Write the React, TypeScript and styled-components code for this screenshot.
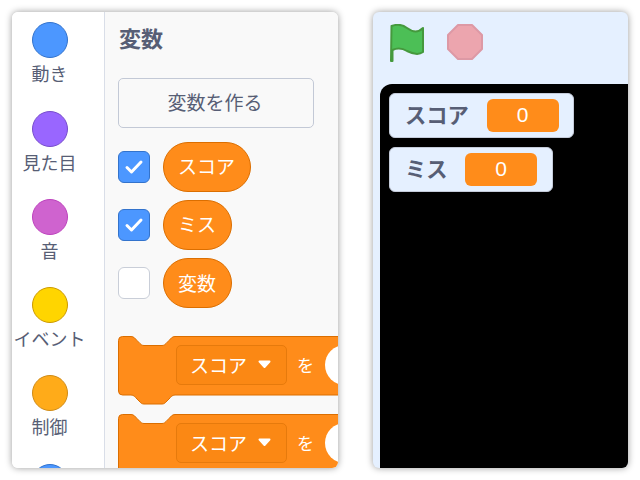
import { FC } from "react";
import styled, { createGlobalStyle } from "styled-components";

const FONT = `"Noto Sans CJK JP", "Noto Sans", sans-serif`;

const categories = [
  { label: "動き", color: "#4c97ff", border: "#3373cc" },
  { label: "見た目", color: "#9966ff", border: "#774dcb" },
  { label: "音", color: "#cf63cf", border: "#bd42bd" },
  { label: "イベント", color: "#ffd500", border: "#cc9900" },
  { label: "制御", color: "#ffab19", border: "#cf8b17" },
  { label: "", color: "#4c97ff", border: "#3373cc" },
];

const variables = [
  { name: "スコア", checked: true },
  { name: "ミス", checked: true },
  { name: "変数", checked: false },
];

const monitors = [
  { name: "スコア", value: 0 },
  { name: "ミス", value: 0 },
];

const App: FC = () => {
  return (
    <SPage>
      <GlobalStyle />
      <SEditor>
        <SCategories>
          {categories.map((c) => (
            <SCategory key={c.color + c.label}>
              <SBubble $color={c.color} $border={c.border} />
              {c.label && <span>{c.label}</span>}
            </SCategory>
          ))}
        </SCategories>
        <SFlyout>
          <SHeading>変数</SHeading>
          <SMakeButton>変数を作る</SMakeButton>
          <SVarList>
            {variables.map((v) => (
              <SVarRow key={v.name}>
                <SCheck $checked={v.checked}>
                  {v.checked && (
                    <svg width="20" height="20" viewBox="0 0 20 20">
                      <path d="M3 10.5 L7.5 15 L17 5" fill="none" stroke="#fff" strokeWidth="3" strokeLinecap="round" strokeLinejoin="round" />
                    </svg>
                  )}
                </SCheck>
                <SPill>{v.name}</SPill>
              </SVarRow>
            ))}
          </SVarList>
          <SBlockList>
            <Block />
            <Block />
          </SBlockList>
        </SFlyout>
      </SEditor>
      <SStageWrap>
        <SControls>
          <svg width="36" height="38" viewBox="0 0 36 38">
            <path d="M2.5 2 C8 0 14 1 18 4 C22 7 28 10 34 4 V28 C30 31 24 30 18 27 C13 24 8 24 3.5 26 V37 H2 Z" fill="#4cbf56" stroke="#45993d" strokeWidth="2" strokeLinejoin="round" />
          </svg>
          <svg width="36" height="36" viewBox="0 0 36 36">
            <path d="M11 1 H25 L35 11 V25 L25 35 H11 L1 25 V11 Z" fill="#eca5ae" stroke="#dd99a5" strokeWidth="2" strokeLinejoin="round" />
          </svg>
        </SControls>
        <SStage>
          {monitors.map((m) => (
            <SMonitor key={m.name}>
              <SMonitorLabel>{m.name}</SMonitorLabel>
              <SMonitorValue>{m.value}</SMonitorValue>
            </SMonitor>
          ))}
        </SStage>
      </SStageWrap>
    </SPage>
  );
};

const Block: FC = () => (
  <SBlock>
    <SBlockShape width="222" height="69" viewBox="0 0 222 69">
      <path d="M0.5 4.5 a4 4 0 0 1 4-4 H13 c3 0 4 2 6 4 l3 3 c1 1 2 2 4 2 H44 c2 0 3-1 4-2 l3-3 c2-2 3-4 6-4 H222 V59 H57 c-3 0-4 2-6 4 l-3 3 c-1 1-2 2-4 2 H26 c-2 0-3-1-4-2 l-3-3 c-2-2-3-4-6-4 H4.5 a4 4 0 0 1-4-4 Z" fill="#ff8c1a" stroke="#db6e00" />
    </SBlockShape>
    <SDropdown>
      <span>スコア</span>
      <svg width="13" height="9" viewBox="0 0 13 9">
        <path d="M1.5 1.5 H11.5 L6.5 7 Z" fill="#fff" stroke="#fff" strokeWidth="2" strokeLinejoin="round" />
      </svg>
    </SDropdown>
    <SBlockText>を</SBlockText>
    <SBlockInput />
  </SBlock>
);

const GlobalStyle = createGlobalStyle`
  html, body {
    margin: 0;
    padding: 0;
    background: #fff;
    font-family: ${FONT};
  }
  * {
    box-sizing: border-box;
  }
`;

const SPage = styled.div`
  width: 640px;
  height: 480px;
  padding: 12px;
  display: flex;
  gap: 35px;
  overflow: hidden;
`;
const SEditor = styled.div`
  width: 326px;
  height: 456px;
  display: flex;
  background: #fff;
  border-radius: 6px;
  overflow: hidden;
  box-shadow: 0 0 7px rgba(0, 0, 0, 0.4);
`;
const SCategories = styled.div`
  width: 93px;
  flex-shrink: 0;
  padding: 10.25px 17px 0 0;
  background: #fff;
  border-right: 1px solid #d9dee8;
  display: flex;
  flex-direction: column;
  align-items: center;
  overflow: hidden;
`;
const SCategory = styled.div`
  height: 88.25px;
  flex-shrink: 0;
  display: flex;
  flex-direction: column;
  align-items: center;
  color: #575e75;
  font-size: 18px;
  line-height: 30px;
  white-space: nowrap;
`;
const SBubble = styled.div<{ $color: string; $border: string }>`
  width: 36px;
  height: 36px;
  border-radius: 50%;
  background: ${(p) => p.$color};
  border: 1px solid ${(p) => p.$border};
`;
const SFlyout = styled.div`
  flex: 1;
  min-width: 0;
  background: #f9f9f9;
  padding: 10px 0 0 13px;
  overflow: hidden;
`;
const SHeading = styled.div`
  color: #575e75;
  font-size: 22px;
  font-weight: 700;
  line-height: 30px;
  margin-left: 1px;
`;
const SMakeButton = styled.div`
  width: 196px;
  height: 50px;
  margin-top: 26px;
  padding: 0 2px 3px 0;
  display: flex;
  align-items: center;
  justify-content: center;
  color: #575e75;
  font-size: 19px;
  background: #f9f9f9;
  border: 1px solid #c3c9d6;
  border-radius: 5px;
`;
const SVarList = styled.div`
  margin-top: 13.5px;
  display: flex;
  flex-direction: column;
  gap: 8.3px;
`;
const SVarRow = styled.div`
  height: 50px;
  display: flex;
  align-items: center;
  gap: 13px;
`;
const SCheck = styled.div<{ $checked: boolean }>`
  width: 32px;
  height: 32px;
  display: flex;
  align-items: center;
  justify-content: center;
  border-radius: 6px;
  background: ${(p) => (p.$checked ? "#4c97ff" : "#fff")};
  border: 1px solid ${(p) => (p.$checked ? "#3373cc" : "#c9ced8")};
`;
const SPill = styled.div`
  height: 50px;
  padding: 0 14.5px 2px 14px;
  display: flex;
  align-items: center;
  color: #fff;
  font-size: 19px;
  background: #ff8c1a;
  border: 1px solid #db6e00;
  border-radius: 25px;
`;
const SBlockList = styled.div`
  margin-top: 28px;
  display: flex;
  flex-direction: column;
  gap: 9px;
`;
const SBlock = styled.div`
  position: relative;
  height: 69px;
  padding: 9px 0 0 58px;
  display: flex;
  align-items: flex-start;
`;
const SBlockShape = styled.svg`
  position: absolute;
  left: 0;
  top: 0;
`;
const SDropdown = styled.div`
  position: relative;
  width: 111px;
  height: 40px;
  flex-shrink: 0;
  padding: 0 2px 2px 0;
  display: flex;
  align-items: center;
  justify-content: center;
  gap: 11px;
  color: #fff;
  font-size: 19px;
  background: #fb8814;
  border: 1px solid #e67a0c;
  border-radius: 5px;
`;
const SBlockText = styled.div`
  position: relative;
  height: 40px;
  flex-shrink: 0;
  margin-left: 10px;
  padding-bottom: 2px;
  display: flex;
  align-items: center;
  color: #fff;
  font-size: 17px;
`;
const SBlockInput = styled.div`
  position: relative;
  width: 40px;
  height: 40px;
  flex-shrink: 0;
  margin-left: 11px;
  border-radius: 50%;
  background: #fff;
`;
const SStageWrap = styled.div`
  width: 255px;
  height: 456px;
  display: flex;
  flex-direction: column;
  background: #e5f0ff;
  border-radius: 6px;
  overflow: hidden;
  box-shadow: 0 0 7px rgba(0, 0, 0, 0.4);
`;
const SControls = styled.div`
  height: 72px;
  flex-shrink: 0;
  padding: 12px 0 0 16px;
  display: flex;
  align-items: flex-start;
  gap: 22px;
`;
const SStage = styled.div`
  flex: 1;
  margin-left: 7px;
  padding: 9px 9px;
  background: #000;
  border-top-left-radius: 12px;
  display: flex;
  flex-direction: column;
  align-items: flex-start;
  gap: 9px;
`;
const SMonitor = styled.div`
  height: 45px;
  padding: 0 14.5px 0 15px;
  display: flex;
  align-items: center;
  gap: 17.6px;
  background: #e5f0ff;
  border: 1px solid #c4cbd9;
  border-radius: 6px;
`;
const SMonitorLabel = styled.div`
  padding-bottom: 4px;
  color: #575e75;
  font-size: 21.3px;
  font-weight: 700;
`;
const SMonitorValue = styled.div`
  width: 72px;
  height: 33px;
  padding-bottom: 1px;
  display: flex;
  align-items: center;
  justify-content: center;
  color: #fff;
  font-size: 21px;
  font-family: "Liberation Sans", sans-serif;
  background: #ff8c1a;
  border-radius: 6px;
`;

export default App;
